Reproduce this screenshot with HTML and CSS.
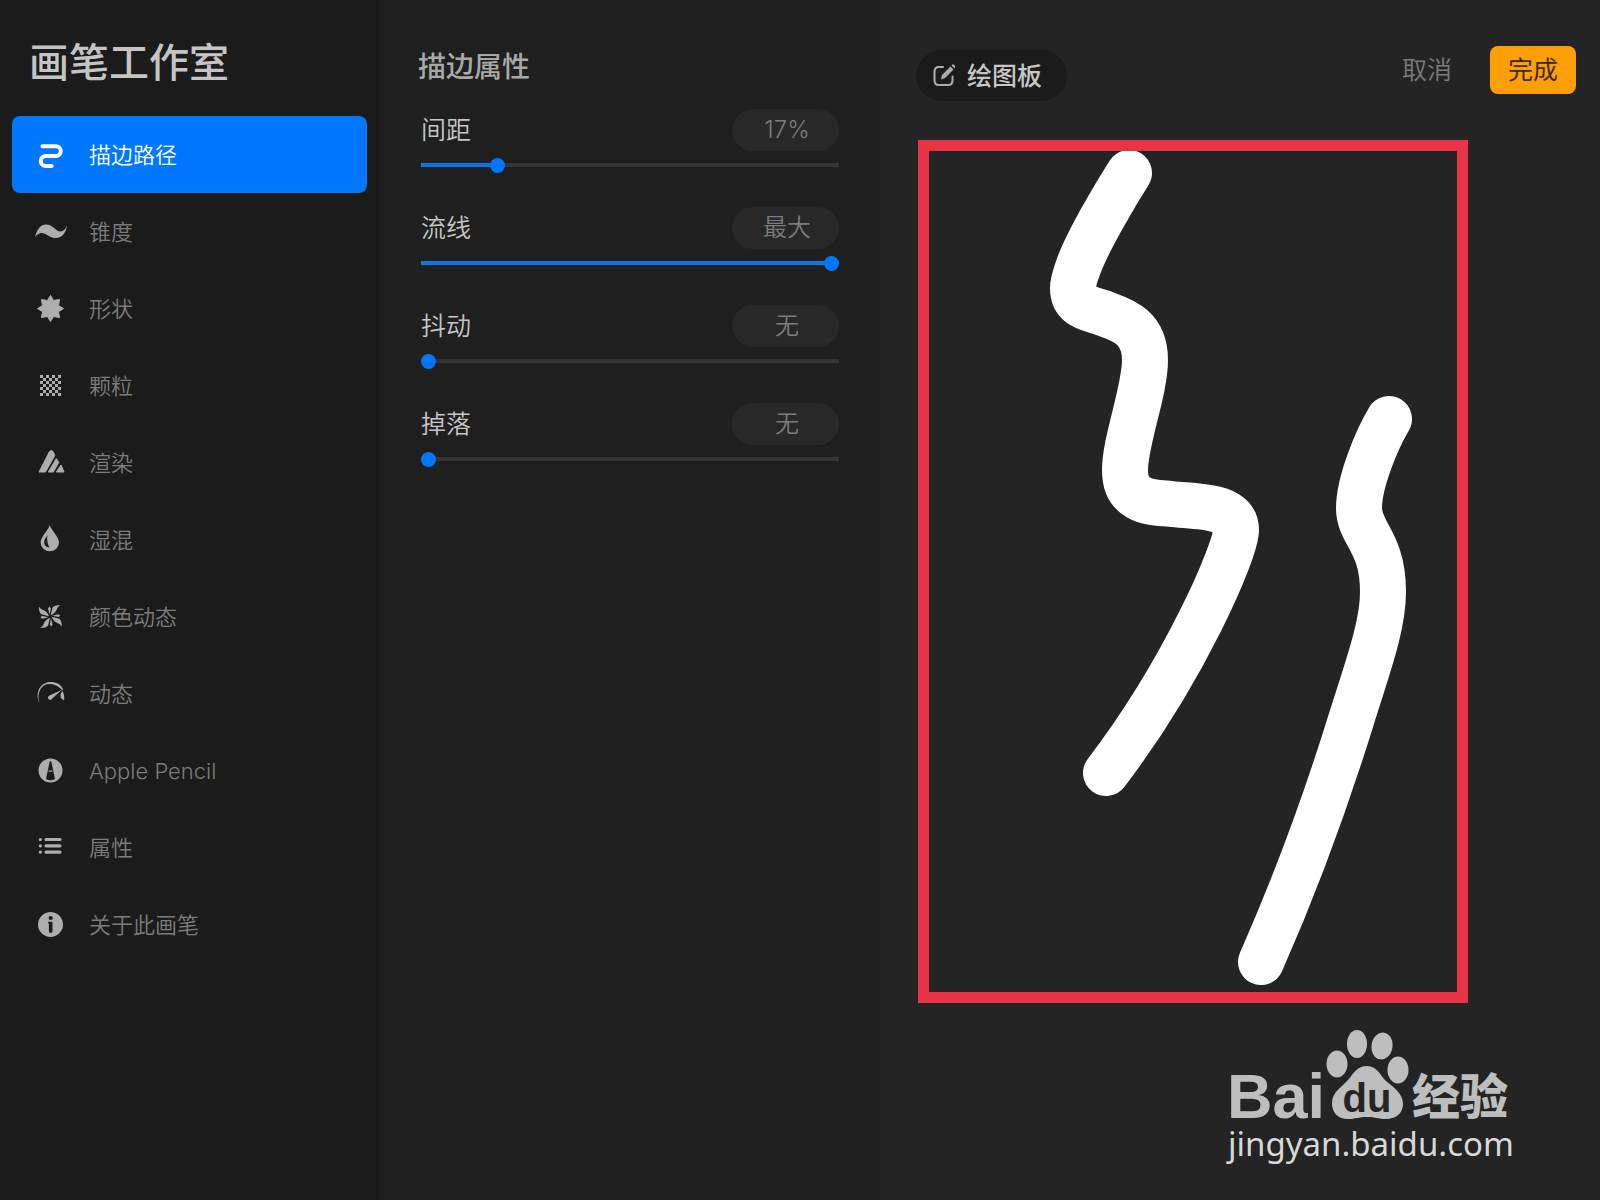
FILE: index.html
```html
<!DOCTYPE html>
<html lang="zh-CN">
  <head>
    <meta charset="UTF-8" />
    <meta name="viewport" content="width=device-width, initial-scale=1.0" />
    <title>画笔工作室</title>
    <link rel="stylesheet" href="styles.css" />
  </head>
  <body>
    <div class="studio">
      <aside class="sidebar">
        <h1>画笔工作室</h1>
        <nav class="menu">
          <a href="#path" class="menu-item active">
            <svg class="icon" viewBox="0 0 32 32">
              <path class="line" stroke-width="4" d="M8.500 7.300H22a4.700 4.700 0 0 1 0 9.600H11.800a5 5 0 0 0 0 10.100H17.600" />
            </svg>
            描边路径
          </a>
          <a href="#taper" class="menu-item">
            <svg class="icon" viewBox="0 0 32 32">
              <path d="M1 21C3 13 7 8.500 12 8.500C19 8.500 22 16 27 15.500C30 15 31.500 12.500 33 9.500C32 17 28 22 22 22C15 22 11 16 7 17C4.500 17.500 2.500 19 1 21Z" />
            </svg>
            锥度
          </a>
          <a href="#shape" class="menu-item">
            <svg class="icon" viewBox="0 0 32 32">
              <path stroke="currentColor" stroke-linejoin="round" d="M16.500 2.500L19.600 7.500L25.600 6.500L24.500 12.500L29.500 15.500L24.500 18.700L25.600 24.600L19.600 23.500L16.500 28.500L13.400 23.500L7.400 24.600L8.500 18.700L3.500 15.500L8.500 12.500L7.400 6.500L13.400 7.500Z" />
            </svg>
            形状
          </a>
          <a href="#grain" class="menu-item">
            <svg class="icon" viewBox="0 0 32 32">
              <path fill="none" stroke="currentColor" stroke-width="3" stroke-dasharray="3 3" d="M6 6.500h21M6 12.500h21M6 18.500h21M6 24.500h21M9 9.500h15M9 15.500h15M9 21.500h15" />
            </svg>
            颗粒
          </a>
          <a href="#render" class="menu-item">
            <svg class="icon" viewBox="0 0 32 32">
              <path stroke="currentColor" stroke-linejoin="round" d="M5 25L15.500 4.500Q17.300 2.500 19 4.500L20.800 8.500L11.500 25ZM14.300 25L22.300 11.500L24.800 15.500L19.300 25ZM22.300 25L27 18L30 25Z" />
            </svg>
            渲染
          </a>
          <a href="#wet" class="menu-item">
            <svg class="icon" viewBox="0 0 32 32">
              <path d="M15.800 1C17 6 25 13 25 18.500A9.200 8.700 0 0 1 6.600 18.500C6.600 13 14.600 6 15.800 1Z" />
              <path class="cut" d="M13.500 11C12.500 16 13.500 20 15.500 23.500C11 23.500 9.500 19.500 10.500 16C11.200 14 13 13 13.500 11Z" />
            </svg>
            湿混
          </a>
          <a href="#color" class="menu-item">
            <svg class="icon" viewBox="0 0 32 32">
              <g id="blade">
                <path d="M16.600 14.200L18.500 6.500Q20.500 4 26.300 4Q23.500 5.500 22.500 9Q21 12.500 16.600 14.200Z" />
                <path d="M15.600 13.500L14 7.500L15.500 5.500L16.800 7.500Z" />
              </g>
              <use href="#blade" transform="rotate(90 16.300 15.500)" />
              <use href="#blade" transform="rotate(180 16.300 15.500)" />
              <use href="#blade" transform="rotate(270 16.300 15.500)" />
            </svg>
            颜色动态
          </a>
          <a href="#dynamics" class="menu-item">
            <svg class="icon" viewBox="0 0 32 32">
              <path d="M5 25C0.500 12 8 4 17 4C22 4 27 6.500 29 11L28.500 12.500C25 8.500 20.500 6.200 16.500 6C8 5.500 2.500 13 5 25Z" />
              <path d="M28 11.800L18.500 20.200A2.300 2.300 0 1 1 15.500 17.400Z" />
              <path d="M28.300 13Q31 16.500 30 22.500L26.800 20L26.500 16Z" />
            </svg>
            动态
          </a>
          <a href="#pencil" class="menu-item">
            <svg class="icon" viewBox="0 0 32 32">
              <circle cx="16.500" cy="15.500" r="12" />
              <path class="cut" d="M16.500 6Q17.300 6 17.600 8L21 24Q16.500 26.500 12 24L15.400 8Q15.700 6 16.500 6Z" />
              <path d="M14.600 15.500h3.800v1.200h-3.800z" />
            </svg>
            Apple Pencil
          </a>
          <a href="#properties" class="menu-item">
            <svg class="icon" viewBox="0 0 32 32">
              <path class="line" stroke-width="3.200" d="M6.300 7.500h.1M12 7.500h14M6.300 13.800h.1M12 13.800h14M6.300 20.100h.1M12 20.100h14" />
            </svg>
            属性
          </a>
          <a href="#about" class="menu-item">
            <svg class="icon" viewBox="0 0 32 32">
              <circle cx="16.500" cy="15.500" r="12.500" />
              <circle class="cut" cx="16.700" cy="9" r="2.100" />
              <path class="cut" d="M14.200 12.800H17.500Q18.500 12.800 18.500 13.800V22.200Q18.500 24 16.700 24T14.900 22.200V14.500H14.200Z" />
            </svg>
            关于此画笔
          </a>
        </nav>
      </aside>

      <section class="settings">
        <h2>描边属性</h2>
        <div class="controls">
          <div class="control">
            <div class="control-head">
              <label for="spacing">间距</label>
              <output for="spacing">17%</output>
            </div>
            <input type="range" id="spacing" min="0" max="100" value="17" style="--value: 17%" />
          </div>
          <div class="control">
            <div class="control-head">
              <label for="streamline">流线</label>
              <output for="streamline">最大</output>
            </div>
            <input type="range" id="streamline" min="0" max="100" value="100" style="--value: 100%" />
          </div>
          <div class="control">
            <div class="control-head">
              <label for="jitter">抖动</label>
              <output for="jitter">无</output>
            </div>
            <input type="range" id="jitter" min="0" max="100" value="0" style="--value: 0%" />
          </div>
          <div class="control">
            <div class="control-head">
              <label for="falloff">掉落</label>
              <output for="falloff">无</output>
            </div>
            <input type="range" id="falloff" min="0" max="100" value="0" style="--value: 0%" />
          </div>
        </div>
      </section>

      <main class="preview">
        <header class="toolbar">
          <button type="button" class="board">
            <svg class="board-icon" viewBox="0 0 24 24">
              <path fill="none" stroke="currentColor" stroke-width="2" stroke-linecap="round" d="M11 3H7Q2.500 3 2.500 7.500V16.500Q2.500 21 7 21H16Q20.500 21 20.500 16.500V12.500" />
              <path d="M9 15.500L10 11L18.500 2.500L21.500 5.500L13 14ZM19.500 1.500L20.500 .5Q21.500 0 22.500 1T23 3.500L22.300 4.300Z" />
            </svg>
            绘图板
          </button>
          <div class="actions">
            <button type="button" class="cancel">取消</button>
            <button type="button" class="done">完成</button>
          </div>
        </header>
        <svg class="canvas" viewBox="0 0 528 841" role="img" aria-label="绘图板">
          <path d="M200 22C186 44 160 88 150 114C147 122 144 130 144 137C144 156 160 157 174 162C190 168 216 174 216 209C216 240 196 290 196 319C196 353 225 351 242 353C270 356 307 354 307 379C307 400 255 520 177 622" />
          <path d="M460 268C448 288 430 331 430 357C430 383 454 390 454 441C454 474 440 512 423 566C402 634 370 725 332 811" />
        </svg>
        <footer class="brand">
          <svg class="brand-logo" viewBox="0 0 284 92">
            <text class="latin" x="-1" y="90">Bai</text>
            <ellipse cx="109" cy="36" rx="10.500" ry="13.500" />
            <ellipse cx="129" cy="16" rx="10" ry="14" />
            <ellipse cx="154" cy="18" rx="10.500" ry="13.500" transform="rotate(8 154 18)" />
            <ellipse cx="170" cy="42" rx="10.500" ry="13.500" />
            <path d="M139 38C149 38 152 47 158 53C165 59 175 65 175 76C175 86 167 91 158 91C151 91 147 89 139 89C131 89 127 91 120 91C110 91 104 85 104 75C104 64 114 59 120 52C126 45 129 38 139 38Z" />
            <text class="du" x="139" y="84">du</text>
            <text class="hanzi" x="184" y="86">经验</text>
          </svg>
          <p>jingyan.baidu.com</p>
        </footer>
      </main>
    </div>
  </body>
</html>
```
FILE: styles.css
```css
* {
  margin: 0;
  padding: 0;
  box-sizing: border-box;
}
body {
  background-color: #242424;
  font-family: Inter, "Noto Sans CJK SC", sans-serif;
  color: #7c7c7c;
}
button {
  border: none;
  font: inherit;
  cursor: pointer;
}
.studio {
  display: grid;
  grid-template-columns: 379fr 501fr 720fr;
  min-height: 100vh;
}

/* sidebar */
.sidebar {
  background-color: #1b1b1b;
  padding: 33px 12px;
}
h1 {
  padding-left: 17px;
  margin-bottom: 23px;
  font-size: 40px;
  line-height: 60px;
  font-weight: 500;
  color: #c4c4c4;
}
.menu {
  display: flex;
  flex-direction: column;
}
.menu-item {
  display: flex;
  align-items: center;
  gap: 23px;
  height: 77px;
  padding-left: 22px;
  border-radius: 8px;
  font-size: 22px;
  line-height: 32px;
  font-weight: 350;
  color: #7c7c7c;
  text-decoration: none;
}
.menu-item.active {
  background-color: #0077ff;
  color: #fff;
}
.icon {
  width: 32px;
  height: 32px;
  color: #adadad;
  fill: currentColor;
  overflow: visible;
}
.active .icon {
  color: #fff;
}
.icon .line {
  fill: none;
  stroke: currentColor;
  stroke-linecap: round;
}
.icon .cut {
  fill: #1b1b1b;
}

/* settings */
.settings {
  background-color: #1f1f1f;
  padding: 47px 41px 0 39px;
}
h2 {
  margin-bottom: 22px;
  font-size: 28px;
  line-height: 40px;
  font-weight: 500;
  color: #a8a8a8;
}
.controls {
  display: flex;
  flex-direction: column;
  gap: 34px;
  padding-left: 3px;
}
.control {
  display: flex;
  flex-direction: column;
  gap: 6px;
}
.control-head {
  display: flex;
  justify-content: space-between;
  align-items: center;
  height: 42px;
}
label {
  font-size: 25px;
  line-height: 42px;
  font-weight: 350;
  color: #c6c6c6;
}
output {
  width: 107px;
  padding-left: 3px;
  border-radius: 21px;
  background-color: #282828;
  font-size: 24px;
  font-weight: 350;
  line-height: 42px;
  text-align: center;
}
input[type="range"] {
  appearance: none;
  width: 100%;
  height: 16px;
  background: none;
}
input[type="range"]::-webkit-slider-runnable-track {
  height: 4px;
  background: linear-gradient(to right, #0d74e8 var(--value), #343434 var(--value));
}
input[type="range"]::-webkit-slider-thumb {
  appearance: none;
  width: 15px;
  height: 15px;
  margin-top: -5px;
  border-radius: 50%;
  background-color: #0077ff;
}

/* drawing board */
.preview {
  padding: 46px 24px 0 36px;
}
.toolbar {
  display: flex;
  justify-content: space-between;
  margin-bottom: 39px;
}
.board {
  display: flex;
  align-items: center;
  gap: 11px;
  height: 51px;
  margin-top: 4px;
  padding: 0 25px 0 16px;
  border-radius: 26px;
  background-color: #1b1b1b;
  font-size: 25px;
  font-weight: 500;
  line-height: 36px;
  color: #c6c6c6;
}
.board-icon {
  width: 24px;
  height: 24px;
  fill: currentColor;
  color: #adadad;
}
.actions {
  display: flex;
  align-items: flex-start;
  gap: 38px;
}
.cancel,
.done {
  height: 48px;
  font-size: 25px;
  line-height: 36px;
}
.cancel {
  background: none;
  font-weight: 350;
  color: #7c7c7c;
}
.done {
  padding: 0 18px;
  border-radius: 8px;
  background-color: #ff9f05;
  color: #3b2b14;
}
.canvas {
  display: block;
  width: calc(100% - 110px);
  margin-left: 2px;
  border: 11px solid #e93447;
  fill: none;
  stroke: #fff;
  stroke-width: 46;
  stroke-linecap: round;
}

/* logo under the board */
.brand {
  width: 284px;
  margin: 25px 64px 0 auto;
  color: #d8d8d8;
}
.brand-logo {
  display: block;
  width: 100%;
  fill: #bebebe;
  overflow: visible;
}
.brand-logo .latin {
  font: 700 63px "Liberation Sans", sans-serif;
}
.brand-logo .du {
  font: 700 40px "Liberation Sans", sans-serif;
  text-anchor: middle;
  fill: #242424;
}
.brand-logo .hanzi {
  font: 900 48px "Noto Sans CJK SC", sans-serif;
}
.brand p {
  font-family: "Noto Sans", sans-serif;
  font-size: 33px;
  line-height: 48px;
  white-space: nowrap;
}
```
